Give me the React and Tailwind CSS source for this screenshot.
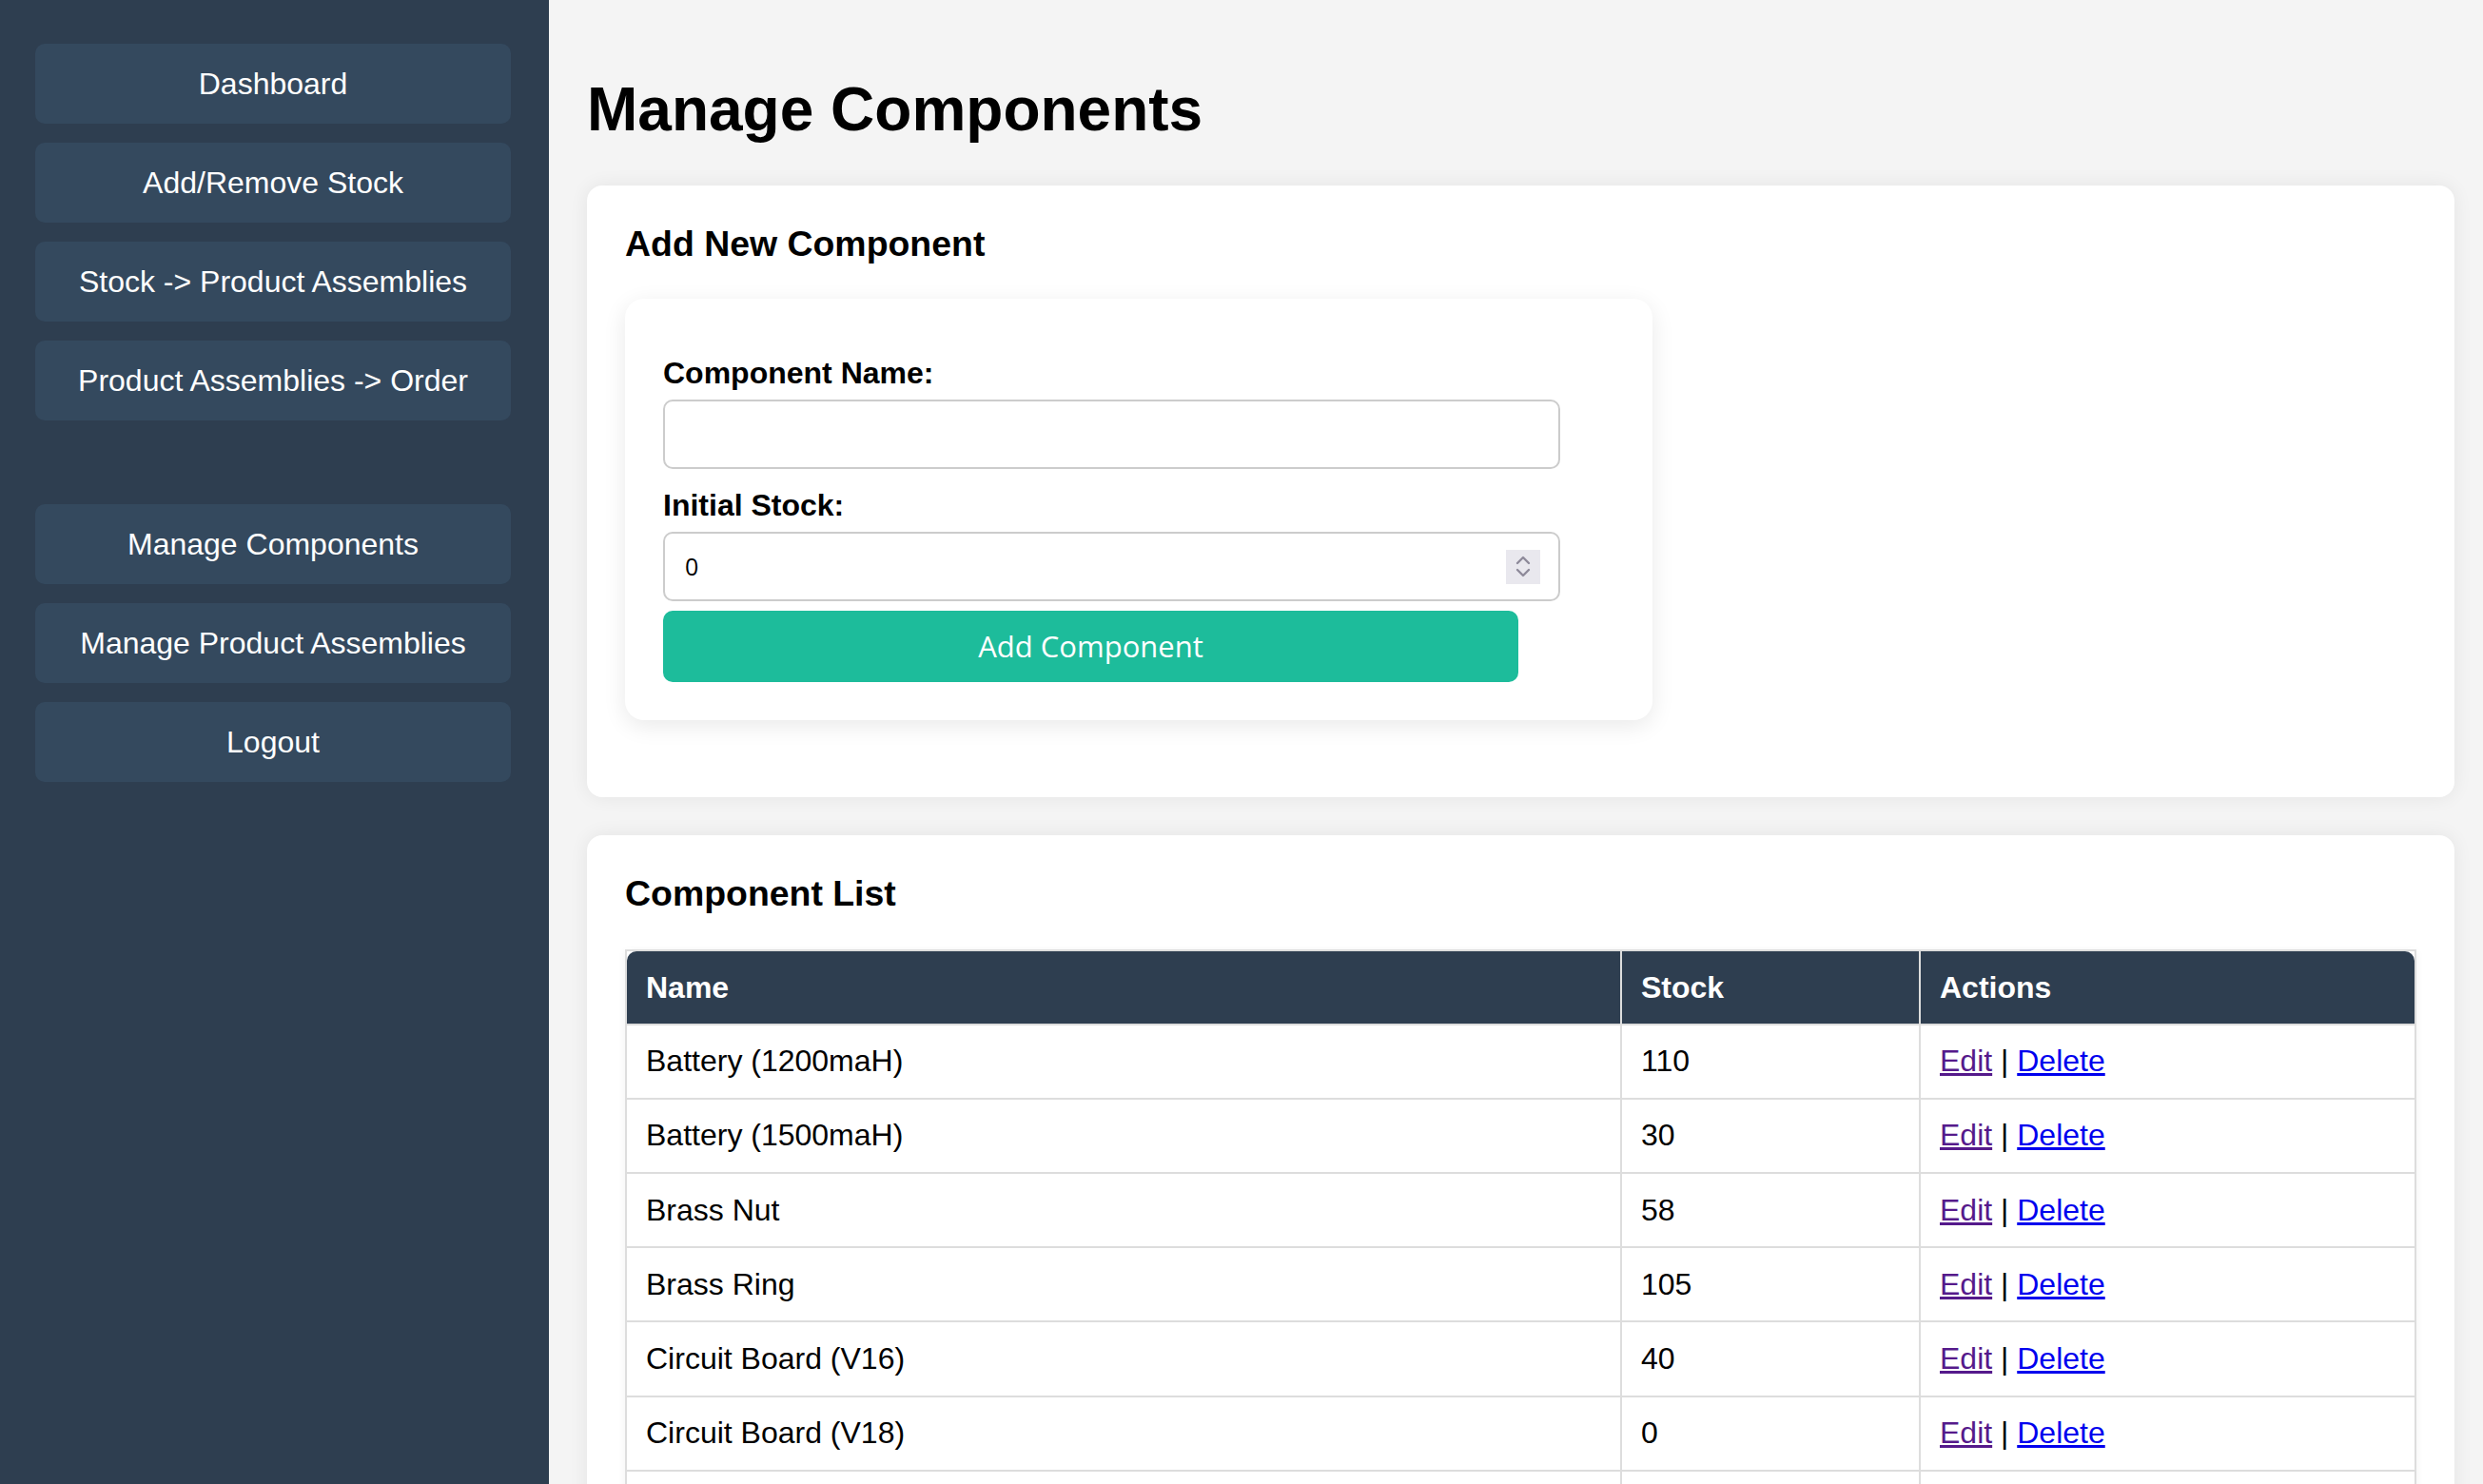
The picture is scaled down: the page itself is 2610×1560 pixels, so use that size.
import React, { useState } from "react";

const navTop = ["Dashboard", "Add/Remove Stock", "Stock -> Product Assemblies", "Product Assemblies -> Order"];
const navBottom = ["Manage Components", "Manage Product Assemblies", "Logout"];

const components = [
  { name: "Battery (1200maH)", stock: 110 },
  { name: "Battery (1500maH)", stock: 30 },
  { name: "Brass Nut", stock: 58 },
  { name: "Brass Ring", stock: 105 },
  { name: "Circuit Board (V16)", stock: 40 },
  { name: "Circuit Board (V18)", stock: 0 },
  { name: "Copper Wire", stock: 220 },
  { name: "LED Module", stock: 75 },
];

const NavButton = ({ label }) => (
  <button className="w-[500px] h-[84px] rounded-[10px] bg-[#34495e] text-white text-[32px] flex items-center justify-center">
    {label}
  </button>
);

const App = () => {
  const [name, setName] = useState("");
  const [stock, setStock] = useState("0");

  return (
    <div className="flex min-h-screen font-['Liberation_Sans',Arial,sans-serif] text-black">
      {/* SIDEBAR */}
      <aside className="w-[577px] shrink-0 bg-[#2e3e50] pl-[37px] pt-[46px] flex flex-col gap-[20px]">
        {navTop.map((l) => (
          <NavButton key={l} label={l} />
        ))}
        <div className="h-[48px]"></div>
        {navBottom.map((l) => (
          <NavButton key={l} label={l} />
        ))}
      </aside>

      {/* MAIN */}
      <main className="flex-1 bg-[#f4f4f4] pl-[40px] pr-[30px] pt-[79px] pb-[40px]">
        <h1 className="text-[64px] font-bold leading-[73.6px] mb-[42px]">Manage Components</h1>

        {/* ADD CARD */}
        <section className="bg-white rounded-[16px] shadow-[0_0_20px_rgba(0,0,0,0.07)] px-[40px] pt-[40px] pb-[40px]">
          <h3 className="text-[37.44px] font-bold leading-[43px] mb-[36px]">Add New Component</h3>

          <div className="w-[1080px] bg-white rounded-[20px] shadow-[0_6px_24px_rgba(0,0,0,0.09)] px-[40px] pt-[40px] pb-[40px] mb-[41px]">
            <label className="block mt-[20px] mb-[9px] text-[32px] font-bold leading-[37px]">Component Name:</label>
            <input
              value={name}
              onChange={(e) => setName(e.target.value)}
              className="block w-[943px] h-[73px] border-2 border-[#cccccc] rounded-[10px] px-[20px] text-[25px] font-['Open_Sans',sans-serif] outline-none"
            />

            <label className="block mt-[20px] mb-[9px] text-[32px] font-bold leading-[37px]">Initial Stock:</label>
            <div className="relative w-[943px]">
              <input
                value={stock}
                onChange={(e) => setStock(e.target.value)}
                className="block w-[943px] h-[73px] border-2 border-[#cccccc] rounded-[10px] px-[21px] text-[25px] font-['Open_Sans',sans-serif] outline-none"
              />
              <div className="absolute right-[21px] top-[19px] w-[36px] h-[36px] bg-[#e9e8ee] flex flex-col items-center justify-center gap-[3px]">
                <svg width="16" height="10" viewBox="0 0 16 10" fill="none">
                  <path d="M2 8 L8 2 L14 8" stroke="#8e8a9a" strokeWidth="2.4" strokeLinecap="round" strokeLinejoin="round" />
                </svg>
                <svg width="16" height="10" viewBox="0 0 16 10" fill="none">
                  <path d="M2 2 L8 8 L14 2" stroke="#8e8a9a" strokeWidth="2.4" strokeLinecap="round" strokeLinejoin="round" />
                </svg>
              </div>
            </div>

            <button className="mt-[10px] w-[899px] h-[75px] rounded-[10px] bg-[#1dbc9b] text-white text-[31px] font-normal font-['Open_Sans',sans-serif] flex items-center justify-center">
              Add Component
            </button>
          </div>
        </section>

        {/* LIST CARD */}
        <section className="mt-[40px] bg-white rounded-[16px] shadow-[0_0_20px_rgba(0,0,0,0.07)] px-[40px] pt-[40px] pb-[40px]">
          <h3 className="text-[37.44px] font-bold leading-[43px] mb-[37px]">Component List</h3>

          <table className="w-full border-separate border-spacing-0 border-2 border-[#dddddd] text-[32px] leading-[37px] shadow-[0_2px_8px_rgba(0,0,0,0.06)]">
            <thead>
              <tr>
                <th className="w-[1046px] text-left font-bold text-white bg-[#2e3e50] border-r-2 border-b-2 border-[#dddddd] px-[20px] pt-[20px] pb-[19px] rounded-tl-[10px]">
                  Name
                </th>
                <th className="w-[314px] text-left font-bold text-white bg-[#2e3e50] border-r-2 border-b-2 border-[#dddddd] px-[20px] pt-[20px] pb-[19px]">
                  Stock
                </th>
                <th className="text-left font-bold text-white bg-[#2e3e50] border-b-2 border-[#dddddd] px-[20px] pt-[20px] pb-[19px] rounded-tr-[10px]">
                  Actions
                </th>
              </tr>
            </thead>
            <tbody>
              {components.map((c) => (
                <tr key={c.name}>
                  <td className="border-r-2 border-b-2 border-[#dddddd] px-[20px] py-[19.6px]">{c.name}</td>
                  <td className="border-r-2 border-b-2 border-[#dddddd] px-[20px] py-[19.6px]">{c.stock}</td>
                  <td className="border-b-2 border-[#dddddd] px-[20px] py-[19.6px]">
                    <a href="#" className="text-[#551a8b] underline">Edit</a> |{" "}
                    <a href="#" className="text-[#0000ee] underline">Delete</a>
                  </td>
                </tr>
              ))}
            </tbody>
          </table>
        </section>
      </main>
    </div>
  );
};

export default App;
